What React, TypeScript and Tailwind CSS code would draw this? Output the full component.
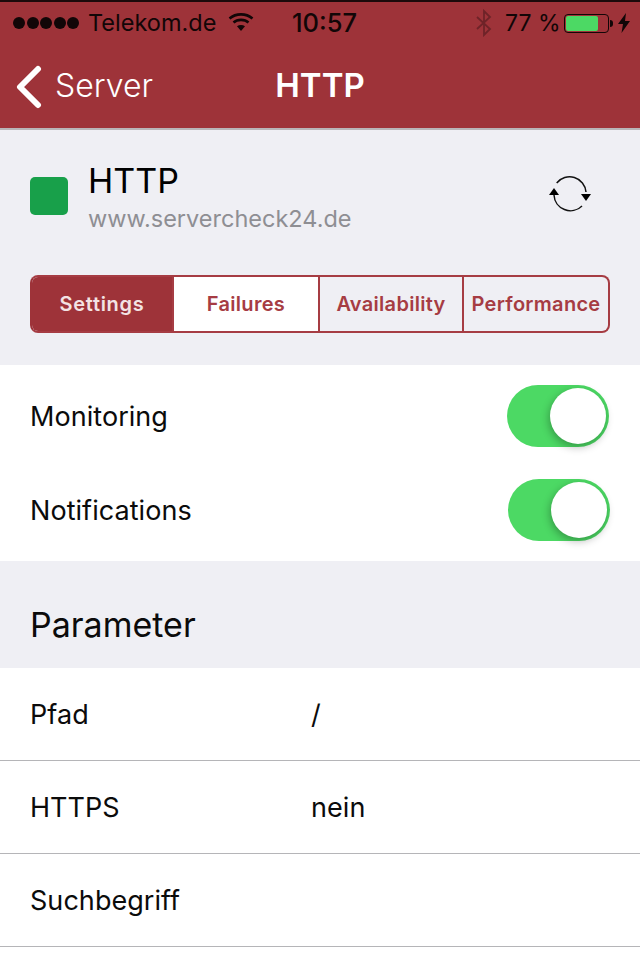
const font = "font-['Inter','Liberation_Sans',sans-serif]"

const tabs = [
  { label: "Settings", width: "w-[140px]" },
  { label: "Failures", width: "w-[146px]" },
  { label: "Availability", width: "w-[144px]" },
  { label: "Performance", width: "flex-1" },
]

const Toggle = ({ shift }: { shift: string }) => (
  <div className={`relative h-[62px] w-[102px] rounded-full bg-[#4cd964] ${shift}`}>
    <div className="absolute right-[3px] top-[3px] h-[56px] w-[56px] rounded-full bg-white shadow-[-1px_3px_8px_rgba(0,0,0,0.3)]" />
  </div>
)

const StatusBar = () => (
  <div className="flex h-[42px] items-center text-[24px] leading-none text-[#120607]">
    <div className="ml-[13px] flex w-[68px] gap-[1.5px]">
      {[0, 1, 2, 3, 4].map((i) => (
        <span key={i} className="h-[12px] w-[12px] rounded-full bg-[#120607]" />
      ))}
    </div>
    <span className="ml-[7px] w-[140px] text-[23.5px]">Telekom.de</span>
    <svg width="26" height="20" viewBox="0 0 26 20" className="-mt-[3px] shrink-0">
      <path d="M1.5 6.5C8 1 18 1 24.5 6.5" fill="none" stroke="#120607" strokeWidth="2.6" />
      <path d="M5.5 10.5C9.5 7 16.5 7 20.5 10.5" fill="none" stroke="#120607" strokeWidth="2.6" />
      <path d="M9 14.2C11.2 12.6 14.8 12.6 17 14.2L13 19Z" fill="#120607" />
    </svg>
    <span className="ml-[38px] w-[92px] text-[25.5px] font-medium">10:57</span>
    <svg width="18" height="28" viewBox="0 0 18 28" className="ml-[91px] shrink-0">
      <path d="M2 8L15 20L9 26V2L15 8L2 20" fill="none" stroke="#6e2328" strokeWidth="1.8" />
    </svg>
    <span className="ml-[12px] w-[59px] text-[23px]">77 %</span>
    <div className="relative h-[19px] w-[45px] shrink-0 rounded-[4px] border-[1.5px] border-[#120607] p-[1px]">
      <div className="h-full w-[32px] rounded-[2px] bg-[#4cd964]" />
    </div>
    <span className="ml-[1px] h-[7px] w-[3px] shrink-0 rounded-r-full bg-[#120607]" />
    <svg width="12" height="20" viewBox="0 0 12 20" className="ml-[5px] shrink-0">
      <path d="M8 0L0 11H5L3.5 20L12 8H7Z" fill="#120607" />
    </svg>
  </div>
)

const InfoRow = ({ label, value }: { label: string; value?: string }) => (
  <div className="flex h-[93px] items-center border-b border-[#b5b5b8] pl-[30px] pt-[2px] text-[27px] tracking-[0.05px] text-[#0b0b0b]">
    <span className="w-[281px]">{label}</span>
    <span>{value}</span>
  </div>
)

export default function App() {
  return (
    <div className={`h-[960px] w-[640px] overflow-hidden bg-white ${font}`}>
      <header className="h-[130px] border-t-[2px] border-b-[2px] border-t-[#1c0a0b] border-b-[#b9b5b8] bg-[#9e3339]">
        <StatusBar />
        <div className="relative flex h-[84px] items-center justify-center text-white">
          <div className="absolute left-[14px] top-[18px] flex items-center">
            <svg width="28" height="44" viewBox="0 0 28 44" className="translate-y-[1px]">
              <path d="M24 4L6 22L24 40" fill="none" stroke="#fff" strokeWidth="6" strokeLinecap="round" strokeLinejoin="round" />
            </svg>
            <span className="ml-[13px] text-[32px] font-light">Server</span>
          </div>
          <span className="text-[33px] font-semibold">HTTP</span>
        </div>
      </header>

      <section className="h-[235px] bg-[#efeff4] px-[30px]">
        <div className="relative flex h-[145px] items-start">
          <div className="mt-[47px] h-[38px] w-[38px] rounded-[5px] bg-[#18a04a]" />
          <div className="ml-[20px] mt-[29px]">
            <div className="text-[34px] leading-[44px] text-black">HTTP</div>
            <div className="mt-[1px] text-[23.5px] leading-[30px] text-[#8e8e93]">www.servercheck24.de</div>
          </div>
          <svg width="46" height="40" viewBox="0 0 46 40" className="absolute left-[517px] top-[45px]">
            <path d="M9.7 8A16.5 16.5 0 0 1 39 17" fill="none" stroke="#111" strokeWidth="1.5" />
            <path d="M7 20A16.5 16.5 0 0 0 35 31" fill="none" stroke="#111" strokeWidth="1.5" />
            <path d="M34 19L44 19L39 26Z" fill="#000" />
            <path d="M2 20L12 20L7 13Z" fill="#000" />
          </svg>
        </div>
        <div className="flex h-[58px] w-[580px] overflow-hidden rounded-[8px] border-[2px] border-[#a63c43] border-l-[#9e3339] bg-[#efeff4]">
          {tabs.map((t, i) => (
            <div
              key={t.label}
              className={`flex items-center justify-center text-[20px] font-semibold ${t.width} ${
                i === 0
                  ? "bg-[#9e3339] tracking-[0.7px] text-[#f3e3e4]"
                  : "border-l-[2px] border-[#a63c43] tracking-[0.3px] text-[#a63c43]"
              } ${i === 1 ? "bg-white" : ""}`}
            >
              {t.label}
            </div>
          ))}
        </div>
      </section>

      <section className="h-[196px] bg-white">
        <div className="flex h-[102px] items-center justify-between px-[30px] text-[27px] tracking-[0.05px] text-[#0b0b0b]">
          <span className="translate-y-[1px]">Monitoring</span>
          <Toggle shift="translate-x-[-1px]" />
        </div>
        <div className="flex h-[86px] items-center justify-between px-[30px] text-[27px] tracking-[0.05px] text-[#0b0b0b]">
          <span className="translate-y-[1px]">Notifications</span>
          <Toggle shift="" />
        </div>
      </section>

      <section className="flex h-[107px] items-center bg-[#efeff4] pl-[30px] pt-[19px] text-[34px] text-[#0b0b0b]">
        Parameter
      </section>

      <InfoRow label="Pfad" value="/" />
      <InfoRow label="HTTPS" value="nein" />
      <InfoRow label="Suchbegriff" />
    </div>
  )
}
